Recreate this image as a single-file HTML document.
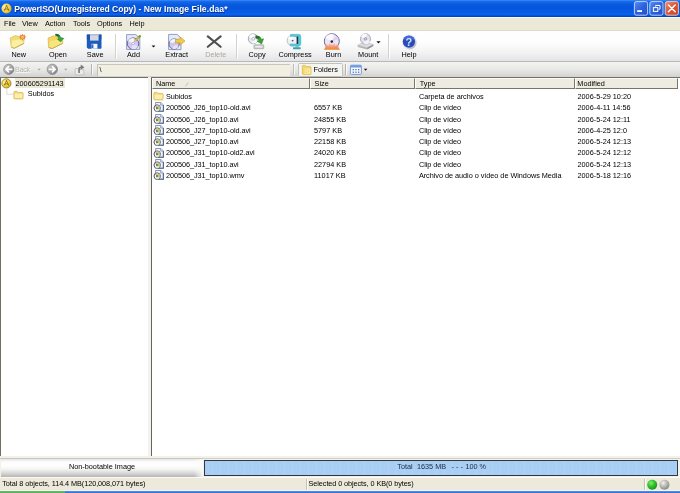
<!DOCTYPE html>
<html><head><meta charset="utf-8"><title>PowerISO</title>
<style>
*{margin:0;padding:0;box-sizing:border-box}
html,body{width:680px;height:493px;overflow:hidden;background:#ece9d8}
body{position:relative;font-family:"Liberation Sans",sans-serif;font-size:7.3px;color:#000;line-height:1}
.a{position:absolute;white-space:nowrap}
#title{left:0;top:0;width:680px;height:16.8px;background:linear-gradient(#3c8ef8 0%,#1869ea 9%,#095be0 25%,#0656da 45%,#075be6 70%,#0b62ee 86%,#0348c0 95%,#0242b4 100%)}
#title .t{left:14.3px;top:4.7px;font-size:8.6px;font-weight:bold;color:#fff;text-shadow:0.5px 0.5px 0 #0a2a80}
#menu{left:0;top:16.8px;width:680px;height:13.7px;background:#ece9d8;border-top:1.2px solid #fbfbf8}
#menu span{position:absolute;top:2.5px}
#tool{left:0;top:30.2px;width:680px;height:31px;background:linear-gradient(#fff 0%,#fefefe 35%,#f3f3f4 70%,#e4e4e7 100%);border-top:1px solid #dedbcd}
.tb{position:absolute;top:20px;text-align:center;transform:translateX(-50%)}
.sep{position:absolute;top:4px;width:1px;height:23px;background:#c5c2b2;border-right:1px solid #fff;width:2px}
#nav{left:0;top:60.7px;width:680px;height:16.8px;background:linear-gradient(#f3f3f2 0%,#e8e8e6 50%,#d2d2d0 100%);border-top:1px solid #b9b9b3}
#left{left:0;top:77px;width:147.5px;height:378.5px;background:#fff;border-top:1px solid #716f64;border-left:1.4px solid #716f64}
#split{left:147.5px;top:77px;width:4px;height:379px;background:#f3f2ee}
#right{left:151px;top:77px;width:529px;height:378.5px;background:#fff;border-top:1px solid #716f64;border-left:1.2px solid #66655c}
#hdr{left:0;top:0;width:528px;height:11px;background:#fff}
#hdr div{position:absolute;top:0;height:11px;background:#eeece0;border-left:1px solid #fff;border-top:1px solid #fbfaf5;border-right:1px solid #77766a;border-bottom:1px solid #77766a}
#hdr span{position:absolute;top:1.3px;left:3.6px}
.row{position:absolute;left:0;height:11px;width:527px}
.row span{position:absolute;top:1.5px}
.ic{position:absolute;left:.8px;top:-.3px}
#bbar{left:0;top:456px;width:680px;height:21.5px;background:#f3f1e8}
#btn{left:1px;top:2.2px;width:202px;height:19px;border-top:1px solid #c6c6c4;background:linear-gradient(#e4e4e4 0%,#fafafa 14%,#fff 35%,#f6f6f6 55%,#d8d8d8 78%,#b4b4b2 100%);text-align:center;padding-top:3.9px}
#btn:after{content:"";position:absolute;right:0;top:0;width:9px;height:100%;background:linear-gradient(90deg,rgba(255,255,255,0),rgba(250,250,248,.95))}
#bline{left:0;top:2.2px;width:680px;height:1px;background:#cfcfca}
#prog{left:203.6px;top:4.2px;width:474.2px;height:15.6px;border:1px solid #2f3744;background:repeating-linear-gradient(90deg,#a8cef4 0,#a8cef4 7px,#afd3f5 7px,#afd3f5 8px);text-align:center;padding-top:1.9px;color:#1c2a48}
#stat{left:0;top:477.4px;width:680px;height:12.4px;background:#edeadb;border-top:1px solid #fbfaf6}
#task{left:0;top:489.8px;width:680px;height:4px;background:linear-gradient(#5d9be8,#2f6ad4 60%,#2a60c8);border-top:.6px solid #f4f4f4}
#task i{position:absolute;left:0;top:0;width:65px;height:4px;background:linear-gradient(#6fc06c,#3a9a3a)}
#w{position:absolute;left:0;top:0;width:680px;height:493px;will-change:transform}
</style></head><body><div id="w">
<svg width="0" height="0" style="position:absolute"><defs>
<symbol id="fold" viewBox="0 0 11 10"><path d="M.9 2.3Q.9 1.3 1.9 1.3L4 1.3L5 2.4L9.3 2.4Q10.1 2.4 10.1 3.2L10.1 8.1Q10.1 8.9 9.3 8.9L1.7 8.9Q.9 8.9 .9 8.1Z" fill="#f6da78" stroke="#d6b24a" stroke-width=".7"/><rect x="1.7" y="3.7" width="7.6" height="4.4" rx=".5" fill="#fcefae"/></symbol>
<symbol id="vid" viewBox="0 0 11 10"><path d="M2.6 .5L7.8 .5L10.4 2.9L10.4 9.2L2.6 9.2Z" fill="#f2f6fc" stroke="#6c7ca8" stroke-width=".8"/><path d="M10.4 3L10.4 9.2L5 9.2" fill="none" stroke="#56668e" stroke-width="1.1"/><path d="M7.6 .6L7.6 3.1L10.3 3.1" fill="#d4def2" stroke="#6c7ca8" stroke-width=".6"/><circle cx="4.2" cy="6.1" r="3.2" fill="#fbfbfd" stroke="#47527a" stroke-width="1"/><path d="M4.2 6.1L4.6 3.2A2.9 2.9 0 0 1 6.6 8Z" fill="#b7cc78"/><path d="M4.2 6.1L1.6 4.8A2.9 2.9 0 0 1 4.6 3.2Z" fill="#eab08c"/><path d="M4.2 6.1L6.6 8A2.9 2.9 0 0 1 2.4 8.4Z" fill="#dfe6b8"/><path d="M3.4 5L5.4 6.1L3.4 7.2Z" fill="#2c2c30"/></symbol>
</defs></svg>
<div id="title" class="a">
<svg class="a" style="left:1.3px;top:2.5px" width="11" height="11" viewBox="0 0 11 11"><defs><radialGradient id="tg" cx=".32" cy=".35" r=".75"><stop offset="0" stop-color="#fdf3a4"/><stop offset=".55" stop-color="#f4d548"/><stop offset="1" stop-color="#dca818"/></radialGradient></defs><circle cx="5.5" cy="5.5" r="5" fill="url(#tg)"/><path d="M5.6 2.6L7.8 7.4M5.6 2.6L3.4 7.4M3.8 6.4Q5.6 5.2 7.4 6.4" fill="none" stroke="#7a5810" stroke-width=".9" stroke-linecap="round" opacity=".85"/></svg>
<span class="a t"><span style="letter-spacing:-.05px">PowerISO(Unregistered Copy) - </span><span style="letter-spacing:.07px">New Image File.daa*</span></span>
</div>
<div id="menu" class="a"><span style="left:4px">File</span><span style="left:22px">View</span><span style="left:45px">Action</span><span style="left:73px">Tools</span><span style="left:97px">Options</span><span style="left:129.5px">Help</span></div>
<div id="tool" class="a">
<span class="tb" style="left:18.7px">New</span>
<span class="tb" style="left:58px">Open</span>
<span class="tb" style="left:95.2px">Save</span>
<span class="tb" style="left:133.5px">Add</span>
<span class="tb" style="left:176.7px">Extract</span>
<span class="tb" style="left:215.7px;color:#aca899">Delete</span>
<span class="tb" style="left:257.1px">Copy</span>
<span class="tb" style="left:295.1px">Compress</span>
<span class="tb" style="left:333.5px">Burn</span>
<span class="tb" style="left:368.2px">Mount</span>
<span class="tb" style="left:409px">Help</span>
</div>
<div id="nav" class="a"></div>
<div id="left" class="a">
<span class="a" style="left:13.5px;top:.3px;width:50.5px;height:10.2px;background:#ece9d8"></span>
<span class="a" style="left:14.5px;top:1.8px">200605291143</span>
<span class="a" style="left:26.8px;top:12.3px">Subidos</span>
</div>
<div id="split" class="a"></div>
<div id="right" class="a">
<div id="hdr" class="a"><div style="left:0;width:158px"><span style="left:2.9px">Name</span><svg class="a" style="left:31px;top:2.5px" width="5" height="5" viewBox="0 0 5 5"><path d="M1.4 4.4L4.2 .6" fill="none" stroke="#b4b2a4" stroke-width=".8"/></svg></div><div style="left:158px;width:104.5px"><span>Size</span></div><div style="left:262.5px;width:160px"><span style="left:4.3px">Type</span></div><div style="left:422.5px;width:103.5px"><span style="left:1.8px">Modified</span></div></div>
<div class="row" style="top:13.45px"><svg class="ic" width="11" height="10" viewBox="0 0 11 10"><use href="#fold"/></svg><span style="left:14px;letter-spacing:-.06px">Subidos</span><span style="left:162px"></span><span style="left:266.9px;letter-spacing:-.035px">Carpeta de archivos</span><span style="left:425.5px">2006-5-29 10:20</span></div>
<div class="row" style="top:24.74px"><svg class="ic" width="11" height="10" viewBox="0 0 11 10"><use href="#vid"/></svg><span style="left:14px;letter-spacing:-.06px">200506_J26_top10-old.avi</span><span style="left:162px">6557 KB</span><span style="left:266.9px;letter-spacing:-.035px">Clip de vídeo</span><span style="left:425.5px">2006-4-11 14:56</span></div>
<div class="row" style="top:36.03px"><svg class="ic" width="11" height="10" viewBox="0 0 11 10"><use href="#vid"/></svg><span style="left:14px;letter-spacing:-.06px">200506_J26_top10.avi</span><span style="left:162px">24855 KB</span><span style="left:266.9px;letter-spacing:-.035px">Clip de vídeo</span><span style="left:425.5px">2006-5-24 12:11</span></div>
<div class="row" style="top:47.32px"><svg class="ic" width="11" height="10" viewBox="0 0 11 10"><use href="#vid"/></svg><span style="left:14px;letter-spacing:-.06px">200506_J27_top10-old.avi</span><span style="left:162px">5797 KB</span><span style="left:266.9px;letter-spacing:-.035px">Clip de vídeo</span><span style="left:425.5px">2006-4-25 12:0</span></div>
<div class="row" style="top:58.61px"><svg class="ic" width="11" height="10" viewBox="0 0 11 10"><use href="#vid"/></svg><span style="left:14px;letter-spacing:-.06px">200506_J27_top10.avi</span><span style="left:162px">22158 KB</span><span style="left:266.9px;letter-spacing:-.035px">Clip de vídeo</span><span style="left:425.5px">2006-5-24 12:13</span></div>
<div class="row" style="top:69.90px"><svg class="ic" width="11" height="10" viewBox="0 0 11 10"><use href="#vid"/></svg><span style="left:14px;letter-spacing:-.06px">200506_J31_top10-old2.avi</span><span style="left:162px">24020 KB</span><span style="left:266.9px;letter-spacing:-.035px">Clip de vídeo</span><span style="left:425.5px">2006-5-24 12:12</span></div>
<div class="row" style="top:81.19px"><svg class="ic" width="11" height="10" viewBox="0 0 11 10"><use href="#vid"/></svg><span style="left:14px;letter-spacing:-.06px">200506_J31_top10.avi</span><span style="left:162px">22794 KB</span><span style="left:266.9px;letter-spacing:-.035px">Clip de vídeo</span><span style="left:425.5px">2006-5-24 12:13</span></div>
<div class="row" style="top:92.48px"><svg class="ic" width="11" height="10" viewBox="0 0 11 10"><use href="#vid"/></svg><span style="left:14px;letter-spacing:-.06px">200506_J31_top10.wmv</span><span style="left:162px">11017 KB</span><span style="left:266.9px;letter-spacing:-.035px">Archivo de audio o vídeo de Windows Media</span><span style="left:425.5px">2006-5-18 12:16</span></div>
</div>
<div id="icons" class="a" style="left:0;top:0">
<!-- title buttons -->
<svg class="a" style="left:633px;top:0" width="47" height="17" viewBox="633 0 47 17">
<defs><linearGradient id="gb" x1="0" y1="0" x2="1" y2="1"><stop offset="0" stop-color="#5a8cf0"/><stop offset=".5" stop-color="#2b62e0"/><stop offset="1" stop-color="#2250c8"/></linearGradient>
<linearGradient id="gr" x1="0" y1="0" x2="1" y2="1"><stop offset="0" stop-color="#ee8f70"/><stop offset=".5" stop-color="#dd5532"/><stop offset="1" stop-color="#c8401e"/></linearGradient></defs>
<rect x="634.4" y="1.6" width="13.2" height="13.6" rx="2" fill="url(#gb)" stroke="#dfe8fb" stroke-width=".8"/>
<rect x="649.8" y="1.6" width="13.2" height="13.6" rx="2" fill="url(#gb)" stroke="#dfe8fb" stroke-width=".8"/>
<rect x="665.2" y="1.6" width="13.2" height="13.6" rx="2" fill="url(#gr)" stroke="#f4e3dc" stroke-width=".8"/>
<rect x="637.2" y="10.2" width="4.8" height="1.8" fill="#fff"/>
<path d="M655.6 5.4L660 5.4L660 9.2L658.6 9.2M655.6 5.4L655.6 6.6" fill="none" stroke="#fff" stroke-width="1"/><rect x="653.4" y="7.6" width="4.4" height="3.8" fill="none" stroke="#fff" stroke-width="1"/>
<path d="M668.4 5L675.2 11.8M675.2 5L668.4 11.8" stroke="#fff" stroke-width="1.5" stroke-linecap="round"/>
</svg>
<!-- nav icons -->
<svg class="a" style="left:3px;top:63px" width="84" height="13" viewBox="3 63 84 13">
<defs><linearGradient id="gg" x1="0" y1="0" x2="1" y2="1"><stop offset="0" stop-color="#d6d6d6"/><stop offset=".5" stop-color="#a6a6a6"/><stop offset="1" stop-color="#767676"/></linearGradient></defs>
<circle cx="8.8" cy="69.3" r="5.1" fill="url(#gg)" stroke="#858585" stroke-width=".7"/>
<path d="M11.8 69.3L6.3 69.3M8.6 66.7L6 69.3L8.6 71.9" fill="none" stroke="#fff" stroke-width="1.7" stroke-linecap="round" stroke-linejoin="round"/>
<path d="M37.5 68.8L40.7 68.8L39.1 70.6Z" fill="#a2a29c"/>
<circle cx="52.3" cy="69.3" r="5.2" fill="url(#gg)" stroke="#858585" stroke-width=".7"/>
<path d="M49.3 69.3L54.8 69.3M52.5 66.7L55.1 69.3L52.5 71.9" fill="none" stroke="#fff" stroke-width="1.7" stroke-linecap="round" stroke-linejoin="round"/>
<path d="M64.2 68.8L67.4 68.8L65.8 70.6Z" fill="#a2a29c"/>
<path d="M75.2 68.6L78.6 68.6L79.6 69.6L83.8 69.6L83.8 74.8L75.2 74.8Z" fill="#ececea" stroke="#b0b0ac" stroke-width=".6"/>
<path d="M78.2 73L78.2 69Q78.4 66.4 80.8 66.4L80.8 64.4L84.4 67.2L80.8 69.8L80.8 68.2Q79.9 68.2 79.9 69.4L79.9 73Z" fill="#7c7c7a"/>
</svg>
<div class="a" style="left:91px;top:64px;width:2px;height:11px;border-left:1px solid #b4b4ae;border-right:1px solid #fafafa"></div>
<div class="a" style="left:96.5px;top:64.3px;width:193px;height:12px;background:#f0efe2;border-left:1px solid #c4c2b6;border-top:1px solid #c9c7bb"></div>
<div class="a" style="left:293px;top:64px;width:2px;height:11px;border-left:1px solid #bdbdb7;border-right:1px solid #f6f6f4"></div>
<div class="a" style="left:297.5px;top:63px;width:45px;height:13.5px;background:#f4f4f1;border:1px solid #c2c2bc;border-radius:1.5px"></div>
<svg class="a" style="left:301px;top:64px" width="12" height="12" viewBox="301 64 12 12">
<path d="M302.4 66.2Q302.4 65.4 303.2 65.4L305.2 65.4L306.2 66.6L310.2 66.6Q311 66.6 311 67.4L311 73.8Q311 74.6 310.2 74.6L303.2 74.6Q302.4 74.6 302.4 73.8Z" fill="#f5d666" stroke="#d4ae3e" stroke-width=".6"/>
<path d="M304.6 68.4L310.4 68.4L310.4 74L304.6 74Z" fill="#fbeb9c"/><path d="M306 69.6L308.8 71.2L306 72.8Z" fill="#f9f3d0" stroke="#e0c050" stroke-width=".4"/>
</svg>
<div class="a" style="left:345px;top:64px;width:2px;height:11px;border-left:1px solid #b4b4ae;border-right:1px solid #fafafa"></div>
<svg class="a" style="left:349px;top:64px" width="20" height="12" viewBox="349 64 20 12">
<rect x="350.4" y="65.2" width="11" height="9.2" rx="1" fill="#f4f8fe" stroke="#5c86cc" stroke-width=".8"/>
<rect x="350.4" y="65.2" width="11" height="2.4" rx="1" fill="#6d9ae0"/>
<g fill="#4a74c0"><rect x="352.6" y="69" width="1.3" height="1.3"/><rect x="355.3" y="69" width="1.3" height="1.3"/><rect x="358" y="69" width="1.3" height="1.3"/><rect x="352.6" y="71.6" width="1.3" height="1.3"/><rect x="355.3" y="71.6" width="1.3" height="1.3"/><rect x="358" y="71.6" width="1.3" height="1.3"/></g>
<path d="M363.8 68.8L367.4 68.8L365.6 70.8Z" fill="#111"/>
</svg>
<span class="a" style="left:15px;top:66px;color:#b6b6b0;letter-spacing:-.35px;text-shadow:.6px .6px 0 #fff">Back</span><span class="a" style="left:99.5px;top:66px">\</span><span class="a" style="left:313.5px;top:66px">Folders</span>
<!-- tree icons -->
<svg class="a" style="left:1.4px;top:78.1px" width="11" height="11" viewBox="0 0 11 11"><circle cx="5.4" cy="5.4" r="4.6" fill="url(#tg)" stroke="#8e7c12" stroke-width=".8"/><path d="M5.5 2.7L7.6 7.2M5.5 2.7L3.4 7.2M3.8 6.2Q5.5 5.1 7.2 6.2" fill="none" stroke="#7a5810" stroke-width=".9" stroke-linecap="round" opacity=".85"/></svg>
<svg class="a" style="left:13.2px;top:89.9px" width="11" height="10" viewBox="0 0 11 10"><use href="#fold"/></svg>
<svg class="a" style="left:6px;top:88px" width="9" height="8" viewBox="0 0 9 8"><path d="M.8 .6L.8 6.3L8 6.3" fill="none" stroke="#cdcdc8" stroke-width=".7"/></svg>
<div class="a" style="left:115px;top:33.5px;width:2px;height:25px;border-left:1px solid #d2d2ce;border-right:1px solid #fff"></div><div class="a" style="left:235.5px;top:33.5px;width:2px;height:25px;border-left:1px solid #d2d2ce;border-right:1px solid #fff"></div><div class="a" style="left:388px;top:33.5px;width:2px;height:25px;border-left:1px solid #d2d2ce;border-right:1px solid #fff"></div>
<!-- New -->
<svg class="a" style="left:9px;top:33px" width="19" height="17" viewBox="9 33 19 17">
<path d="M10.2 38L15.3 35.5L20.4 37L23.9 40L23.8 43.5L14.2 48.2L11.2 47Z" fill="#f1dd74" stroke="#d8ba50" stroke-width=".7" stroke-linejoin="round"/>
<path d="M11.9 40.8L20 39.2L23.5 41.8L23.5 43.3L14.2 47.9L11.5 46.8Z" fill="#f9f0a2"/>
<path d="M23.9 43.4L14.2 48.3L11.4 47.2" fill="none" stroke="#c49c3e" stroke-width=".8" stroke-linejoin="round"/>
<path d="M22.6 33.7L23.5 35.2L25.2 34.6L24.8 36.3L26.3 37.1L24.8 38L25.2 39.7L23.5 39.1L22.6 40.6L21.7 39.1L20 39.7L20.4 38L18.9 37.1L20.4 36.3L20 34.6L21.7 35.2Z" fill="#e6823a"/><circle cx="22.6" cy="37.1" r="1.7" fill="#f5b862"/>
</svg>
<!-- Open -->
<svg class="a" style="left:47px;top:33px" width="19" height="17" viewBox="47 33 19 17">
<path d="M48 38.2L53.3 35.8L58.4 37.4L63 41.3L62.6 43.4L52.1 48.5L48.6 47.4Z" fill="#f3d465" stroke="#d8b44c" stroke-width=".7" stroke-linejoin="round"/>
<path d="M50 41.2L58 39.6L62.5 42L62.4 43.3L52.1 48.2L49 47.1Z" fill="#f4e87c"/>
<path d="M62.7 43.4L52.1 48.6L48.8 47.5" fill="none" stroke="#c49c3e" stroke-width=".8" stroke-linejoin="round"/>
<path d="M55.6 34Q59.6 33.8 60.8 37.6L63.9 38.4L60.6 41.8L57.4 39.2L58.8 38.4Q58.4 36 55.6 35.4Z" fill="#3aa83a" stroke="#1f7426" stroke-width=".5" stroke-linejoin="round"/>
<path d="M55.6 34Q58.4 33.9 59.8 35.8L58.6 36.8Q57.6 35.6 55.6 35.4Z" fill="#1d6a22"/>
</svg>
<!-- Save -->
<svg class="a" style="left:86px;top:34px" width="17" height="16" viewBox="86 34 17 16">
<path d="M86.8 35.2Q86.8 34.4 87.6 34.4L100.7 34.4Q101.5 34.4 101.5 35.2L101.5 47.8Q101.5 48.7 100.7 48.7L88.2 48.7L86.8 47.4Z" fill="#1d5bbd"/>
<rect x="86.8" y="34.4" width="14.7" height="5" fill="#1a4ea6" opacity=".6"/>
<rect x="90" y="34.4" width="8.6" height="6.2" fill="#d3d7e0"/>
<rect x="90" y="34.4" width="8.6" height="1.3" fill="#bcc2d0"/>
<rect x="91.4" y="43.8" width="6" height="4.9" fill="#f4f6fa"/>
<rect x="91.4" y="44.4" width="2" height="3.6" fill="#2a66c4"/>
</svg>
<!-- Add -->
<svg class="a" style="left:125px;top:33px" width="18" height="18" viewBox="125 33 18 18">
<path d="M126.6 34.6L135.8 34.6L139.8 38.2L139.8 49.4L126.6 49.4Z" fill="#e2ebf8" stroke="#7c88ba" stroke-width=".8"/>
<circle cx="133" cy="43.6" r="5.7" fill="#d2c8f0" stroke="#5c6488" stroke-width="1"/>
<path d="M133 43.6L128 41A5.4 5.4 0 0 1 134.8 38.4Z" fill="#f4f0fc"/><path d="M133 43.6L138 46.2A5.4 5.4 0 0 1 131.2 48.8Z" fill="#e8e0f8"/>
<circle cx="133" cy="43.6" r="1.3" fill="#f8f6fc" stroke="#8a88c0" stroke-width=".5"/>
<path d="M134.4 41.4L135 39.6L139 35.6L140.4 37L136.3 41Z" fill="#cdb444" stroke="#9a8830" stroke-width=".3"/>
<path d="M138.2 36.4L139.2 35.4Q140 34.7 140.8 35.4Q141.5 36.2 140.8 37L139.8 37.9Z" fill="#6a9e34"/>
<path d="M134.4 41.4L134.9 39.9L136 41Z" fill="#f4dcd4"/>
</svg>
<svg class="a" style="left:151px;top:45px" width="5" height="3" viewBox="0 0 5 3"><path d="M.6 .4L4.4 .4L2.5 2.5Z" fill="#111"/></svg>
<!-- Extract -->
<svg class="a" style="left:167px;top:33px" width="19" height="18" viewBox="167 33 19 18">
<path d="M168.6 34.4L177.2 34.4L181 38L181 49.6L168.6 49.6Z" fill="#e2ebf8" stroke="#7c88ba" stroke-width=".8"/>
<circle cx="174.1" cy="44" r="5.1" fill="#d2c8f0" stroke="#5c6488" stroke-width=".9"/>
<path d="M174.1 44L169.6 41.7A4.8 4.8 0 0 1 175.8 39.3Z" fill="#f4f0fc"/><path d="M174.1 44L178.6 46.3A4.8 4.8 0 0 1 172.4 48.7Z" fill="#e8e0f8"/>
<circle cx="174.1" cy="44" r="1.2" fill="#f8f6fc" stroke="#8a88c0" stroke-width=".5"/>
<path d="M175.6 39.2L180 39.2L180 36.9L185 41L180 45.1L180 42.8L175.6 42.8Z" fill="#f3cc42" stroke="#bc9630" stroke-width=".6" stroke-linejoin="round"/>
</svg>
<!-- Delete -->
<svg class="a" style="left:206px;top:35px" width="17" height="14" viewBox="206 35 17 14"><path d="M207.8 36.4L220.6 46.8M220.6 36.4L207.8 46.8" stroke="#505050" stroke-width="2.1" stroke-linecap="round" fill="none"/></svg>
<!-- Copy -->
<svg class="a" style="left:247px;top:33px" width="19" height="17" viewBox="247 33 19 17">
<rect x="254" y="44.8" width="9.7" height="3.9" rx=".6" fill="#d2d2d2" stroke="#949494" stroke-width=".6"/><rect x="255.4" y="46.3" width="6.8" height="1" fill="#f6f6f6"/>
<circle cx="253.2" cy="38.8" r="4.9" fill="#e8eaf0" stroke="#8c94a6" stroke-width=".8"/>
<path d="M253.2 38.8L249 36.6A4.7 4.7 0 0 1 254.6 34.3Z" fill="#fff"/><path d="M253.2 38.8L257.6 41A4.7 4.7 0 0 1 252 43.3Z" fill="#fafbfd"/>
<circle cx="253.2" cy="38.8" r="1.4" fill="#fff" stroke="#8c94a6" stroke-width=".6"/>
<path d="M255.8 35.8Q260 35.6 261.6 39.2L263.6 38.8L261.6 44L257.2 41.2L259.2 40.4Q258.4 38.4 255.8 38.2Z" fill="#3ea336" stroke="#2a7428" stroke-width=".5" stroke-linejoin="round"/><path d="M255.8 35.8Q258.6 35.7 260.4 37.4L259 38.6Q257.8 37.9 255.8 38.2Z" fill="#2a6a28"/>
</svg>
<!-- Compress -->
<svg class="a" style="left:286px;top:33px" width="17" height="17" viewBox="286 33 17 17">
<circle cx="292.4" cy="40.6" r="5.3" fill="#eef0f6" stroke="#a4aabc" stroke-width=".7"/>
<path d="M292.4 40.6L288 38.4A5 5 0 0 1 293.8 35.6Z" fill="#fff"/>
<path d="M291 34.3L298.6 34.3Q300.9 34.3 300.9 36.6L300.9 43.8Q300.9 46.1 298.6 46.1L291 46.1Q290.2 46.1 290.2 45.3L290.2 43.9L297 43.9L297 36.5L290.2 36.5L290.2 35.1Q290.2 34.3 291 34.3Z" fill="#5ac8d4" stroke="#3aa6b4" stroke-width=".4"/>
<rect x="296.7" y="36.5" width="1.5" height="7.4" fill="#1c2c46"/>
<circle cx="292.6" cy="40.6" r=".9" fill="#4c5474"/>
<rect x="295.4" y="46.1" width="3.2" height="1.2" fill="#5ac8d4"/>
<rect x="293" y="47.2" width="7.7" height="2" rx=".4" fill="#3f9fb0"/>
</svg>
<!-- Burn -->
<svg class="a" style="left:322px;top:32px" width="19" height="19" viewBox="322 32 19 19">
<defs><linearGradient id="fl" x1="0" y1="1" x2="0" y2="0"><stop offset="0" stop-color="#ee7a48"/><stop offset=".6" stop-color="#f4a686" stop-opacity=".85"/><stop offset="1" stop-color="#f8c8b4" stop-opacity=".5"/></linearGradient></defs>
<circle cx="331.8" cy="41.2" r="7.5" fill="#ebe7f8" stroke="#70669a" stroke-width="1"/>
<path d="M331.8 41.2L325.2 38A7.2 7.2 0 0 1 333.6 34.2Z" fill="#fbfaff"/><path d="M331.8 41.2L338.6 39A7.2 7.2 0 0 0 336.4 35.8Z" fill="#d9d0f0"/>
<path d="M324.6 49.4L325.4 46L327 43.6L328 46L329.8 42L331 45L331.8 43.4L332.8 45.2L334.4 42L335.8 46L337 43.8L338.4 46.2L339.2 49.4Z" fill="url(#fl)"/>
<path d="M324.2 49.2L339.8 49.2" stroke="#e8a040" stroke-width="1.1"/>
<circle cx="331.8" cy="41.6" r="1.3" fill="#3a2040"/>
</svg>
<!-- Mount -->
<svg class="a" style="left:356px;top:33px" width="19" height="17" viewBox="356 33 19 17">
<path d="M357.7 45.2L363.6 42.2L373.4 44.4L367.2 47.8Z" fill="#dcdcdc" stroke="#a6a6a6" stroke-width=".4"/>
<path d="M357.7 45.2L367.2 47.8L367.2 49.5L357.7 46.9Z" fill="#b4b4b4"/><path d="M367.2 47.8L373.4 44.4L373.4 46.1L367.2 49.5Z" fill="#8c8c8c"/>
<ellipse cx="365.5" cy="38.9" rx="5" ry="5.3" fill="#e4e2f0" stroke="#9a9aa4" stroke-width=".8"/>
<path d="M365.5 38.9L361 36.6A5 5 0 0 1 367 33.9Z" fill="#fbfbfe"/><path d="M365.5 38.9L370 41.2A5 5 0 0 1 364 44Z" fill="#f2f1f8"/>
<circle cx="365.5" cy="38.9" r="1.3" fill="#c9c7d8" stroke="#84849a" stroke-width=".6"/>
</svg>
<svg class="a" style="left:375.8px;top:40.6px" width="5" height="3" viewBox="0 0 5 3"><path d="M.4 .3L4.6 .3L2.5 2.6Z" fill="#111"/></svg>
<!-- Help -->
<svg class="a" style="left:401px;top:33px" width="17" height="18" viewBox="401 33 17 18">
<defs><linearGradient id="hr" x1="0" y1="0" x2="1" y2="1"><stop offset="0" stop-color="#fdfdfe"/><stop offset=".6" stop-color="#e4e6ee"/><stop offset="1" stop-color="#9a9eac"/></linearGradient></defs>
<circle cx="409.3" cy="42" r="7.4" fill="url(#hr)"/>
<circle cx="408.9" cy="41.6" r="6.2" fill="#2a4cba"/><path d="M403.4 39.8A5.8 5.8 0 0 1 414.4 39.8Q408.9 37.6 403.4 39.8Z" fill="#456cd4"/>
<text x="408.9" y="45.6" font-family="Liberation Sans,sans-serif" font-weight="bold" font-size="11" fill="#cfe0fa" text-anchor="middle">?</text>
</svg>
</div>
<div id="bbar" class="a"><div id="bline" class="a"></div><div id="btn" class="a">Non-bootable Image</div><div id="prog" class="a"><span class="a" style="left:192.7px;top:1.9px">Total</span><span class="a" style="left:212.3px;top:1.9px">1635 MB</span><span class="a" style="left:247.0px;top:1.9px">- - -</span><span class="a" style="left:260.8px;top:1.9px">100 %</span></div></div>
<div id="stat" class="a"><div class="a" style="left:305.5px;top:1px;width:2px;height:11px;border-left:1px solid #c6c3b2;border-right:1px solid #fdfcf8"></div><div class="a" style="left:644px;top:1px;width:2px;height:11px;border-left:1px solid #c6c3b2;border-right:1px solid #fdfcf8"></div>
<svg class="a" style="left:646px;top:0.6px" width="26" height="12" viewBox="646 478 26 12"><defs><radialGradient id="cg" cx=".38" cy=".32" r=".75"><stop offset="0" stop-color="#7cf070"/><stop offset=".5" stop-color="#2fc02c"/><stop offset="1" stop-color="#178a18"/></radialGradient><radialGradient id="cy" cx=".38" cy=".32" r=".75"><stop offset="0" stop-color="#f2f2ee"/><stop offset=".5" stop-color="#b8b8b2"/><stop offset="1" stop-color="#80807a"/></radialGradient></defs><circle cx="652.2" cy="483.8" r="5" fill="url(#cg)"/><circle cx="664.4" cy="483.8" r="5" fill="url(#cy)"/></svg><span class="a" style="left:2.2px;top:1.4px;letter-spacing:-.07px">Total 8 objects, 114.4 MB(120,008,071 bytes)</span><span class="a" style="left:308.6px;top:1.4px;letter-spacing:-.09px">Selected 0 objects, 0 KB(0 bytes)</span></div>
<div id="task" class="a"><i></i></div>
</div></body></html>
